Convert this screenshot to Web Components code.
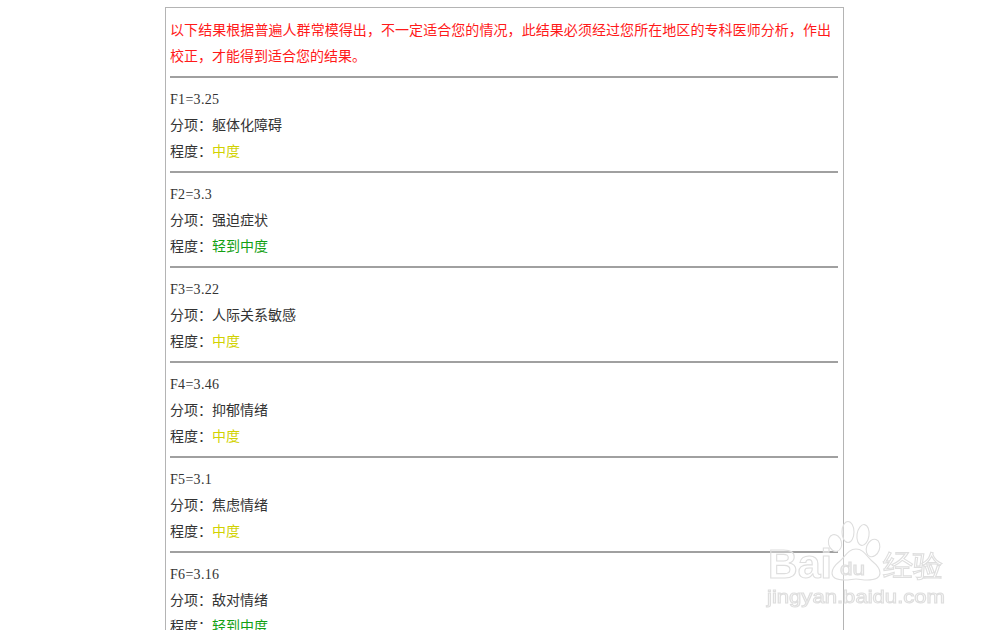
<!DOCTYPE html>
<html lang="zh">
<head>
<meta charset="utf-8">
<title>结果</title>
<style>
  html, body { margin: 0; height: 630px; overflow: hidden; background: #fff; }
</style>
</head>
<body>
<result-page>
  <result-card>
    <result-note>以下结果根据普遍人群常模得出，不一定适合您的情况，此结果必须经过您所在地区的专科医师分析，作出校正，才能得到适合您的结果。</result-note>
    <result-item score="F1=3.25" name="躯体化障碍" level="中度" tone="mid"></result-item>
    <result-item score="F2=3.3" name="强迫症状" level="轻到中度" tone="low"></result-item>
    <result-item score="F3=3.22" name="人际关系敏感" level="中度" tone="mid"></result-item>
    <result-item score="F4=3.46" name="抑郁情绪" level="中度" tone="mid"></result-item>
    <result-item score="F5=3.1" name="焦虑情绪" level="中度" tone="mid"></result-item>
    <result-item score="F6=3.16" name="敌对情绪" level="轻到中度" tone="low"></result-item>
  </result-card>
  <baidu-mark></baidu-mark>
</result-page>

<script>
/* global HTMLElement */
class ResultPage extends HTMLElement {
  constructor () {
    super()
    this.attachShadow({ mode: 'open' }).innerHTML = `
      <style>
        :host {
          display: block;
          position: relative;
          height: 630px;
          overflow: hidden;
          padding: 7px 0 0 165px;
          box-sizing: border-box;
        }
      </style>
      <slot></slot>
    `
  }
}

class ResultCard extends HTMLElement {
  constructor () {
    super()
    this.attachShadow({ mode: 'open' }).innerHTML = `
      <style>
        :host {
          display: block;
          width: 679px;
          box-sizing: border-box;
          border: 1px solid #b4b4b4;
          padding: 8px 4px 0;
          font: 14px/26px "Noto Sans CJK SC", sans-serif;
          color: #333;
        }
      </style>
      <slot></slot>
    `
  }
}

class ResultNote extends HTMLElement {
  constructor () {
    super()
    this.attachShadow({ mode: 'open' }).innerHTML = `
      <style>
        :host {
          display: block;
          color: #ff1a1a;
          padding-right: 8px;
          text-align: justify;
        }
      </style>
      <slot></slot>
    `
  }
}

var tones = { mid: '#d2d200', low: '#12a012' }

class ResultItem extends HTMLElement {
  constructor () {
    super()
    this.attachShadow({ mode: 'open' }).innerHTML = `
      <style>
        :host { display: block; }
        hr {
          height: 2px;
          margin: 8px 1px 7px 0;
          border: 0;
          background: #a0a0a0;
        }
        div { height: 26px; }
        .score {
          font-family: "Liberation Serif", serif;
          letter-spacing: .3px;
          line-height: 30px;
        }
        .level { color: var(--tone); }
      </style>
      <hr>
      <div class="score"></div>
      <div>分项：<span class="name"></span></div>
      <div>程度：<span class="level"></span></div>
    `
  }

  connectedCallback () {
    var root = this.shadowRoot
    root.querySelector('.score').textContent = this.getAttribute('score')
    root.querySelector('.name').textContent = this.getAttribute('name')
    root.querySelector('.level').textContent = this.getAttribute('level')
    this.style.setProperty('--tone', tones[this.getAttribute('tone')])
  }
}

class BaiduMark extends HTMLElement {
  constructor () {
    super()
    this.attachShadow({ mode: 'open' }).innerHTML = `
      <style>
        :host {
          display: block;
          position: absolute;
          left: 760px;
          top: 518px;
          width: 190px;
          height: 100px;
        }
        svg { display: block; filter: blur(.4px); }
        text, .paw {
          fill: #fff;
          fill-opacity: .35;
          stroke: #dedede;
          stroke-width: 1.1;
        }
        text { font-family: "Liberation Sans", sans-serif; }
      </style>
      <svg width="190" height="100" viewBox="0 0 190 100">
        <text x="8" y="60" font-size="41" font-weight="700" textLength="64" lengthAdjust="spacingAndGlyphs">Bai</text>
        <ellipse class="paw" cx="75" cy="25" rx="6.5" ry="8.5" transform="rotate(-15 75 25)"/>
        <ellipse class="paw" cx="88" cy="14" rx="6" ry="10.5"/>
        <ellipse class="paw" cx="103" cy="17" rx="6" ry="10.5" transform="rotate(8 103 17)"/>
        <ellipse class="paw" cx="113" cy="30" rx="6.5" ry="9" transform="rotate(20 113 30)"/>
        <path class="paw" d="M96 31c-8 0-11 8-16 12-5 4-8 8-8 12 0 5 6 7 13 7 4 0 8-1 11-1s7 1 11 1c7 0 13-2 13-7 0-4-3-8-8-12-5-4-8-12-16-12z"/>
        <text x="80" y="57" font-size="18" textLength="25" lengthAdjust="spacingAndGlyphs">du</text>
        <text x="123" y="58" font-size="29.5" font-family="Noto Sans CJK SC">经验</text>
        <text x="7" y="85" font-size="19" textLength="178" lengthAdjust="spacingAndGlyphs">jingyan.baidu.com</text>
      </svg>
    `
  }
}

window.customElements.define('result-page', ResultPage)
window.customElements.define('result-card', ResultCard)
window.customElements.define('result-note', ResultNote)
window.customElements.define('result-item', ResultItem)
window.customElements.define('baidu-mark', BaiduMark)
</script>
</body>
</html>
